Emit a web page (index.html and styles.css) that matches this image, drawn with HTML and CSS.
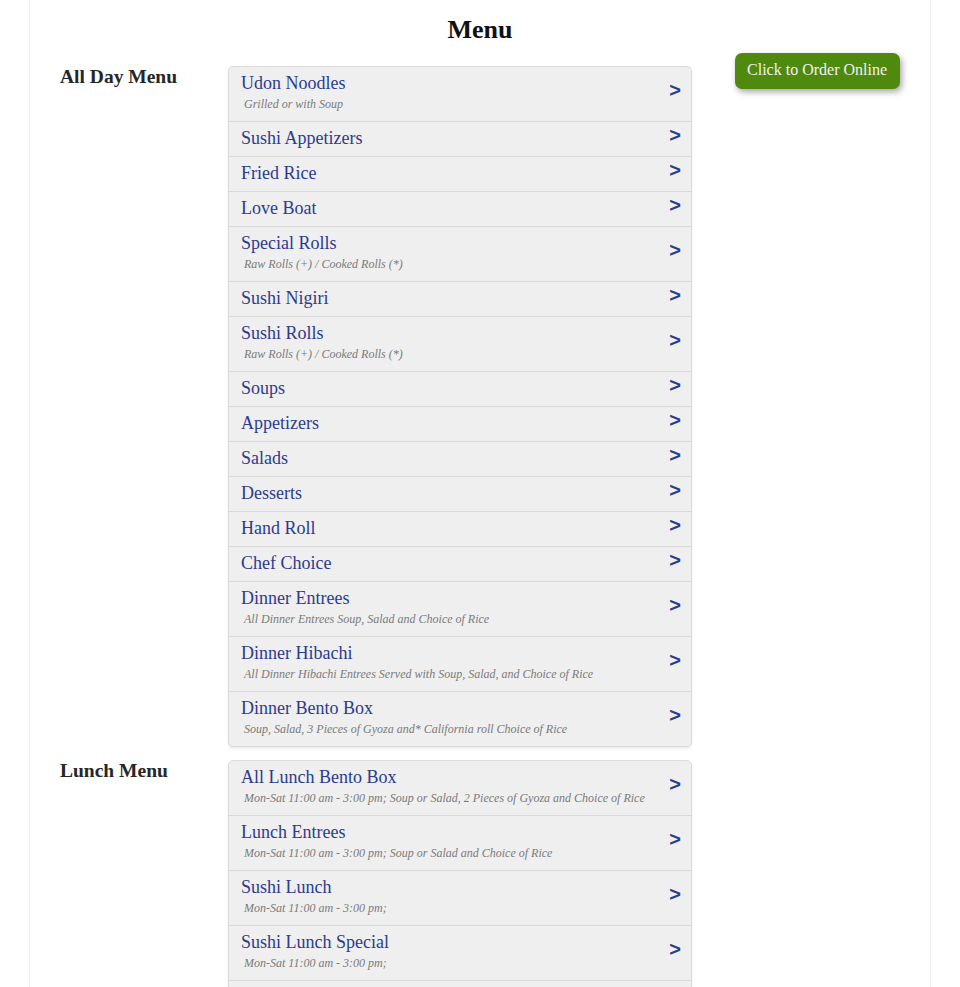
FILE: index.html
```html
<!DOCTYPE html>
<html>
<head>
<meta charset="utf-8">
<title>Menu</title>
<link rel="stylesheet" href="styles.css">
</head>
<body>
<div class="page">
  <h1 class="page-title">Menu</h1>

  <div class="section">
    <h2 class="section-label">All Day Menu</h2>
    <div class="menu-list">
      <a class="row"><div class="row-text"><div class="row-title">Udon Noodles</div><div class="row-sub">Grilled or with Soup</div></div><span class="arrow">&gt;</span></a>
      <a class="row"><div class="row-text"><div class="row-title">Sushi Appetizers</div></div><span class="arrow">&gt;</span></a>
      <a class="row"><div class="row-text"><div class="row-title">Fried Rice</div></div><span class="arrow">&gt;</span></a>
      <a class="row"><div class="row-text"><div class="row-title">Love Boat</div></div><span class="arrow">&gt;</span></a>
      <a class="row"><div class="row-text"><div class="row-title">Special Rolls</div><div class="row-sub">Raw Rolls (+) / Cooked Rolls (*)</div></div><span class="arrow">&gt;</span></a>
      <a class="row"><div class="row-text"><div class="row-title">Sushi Nigiri</div></div><span class="arrow">&gt;</span></a>
      <a class="row"><div class="row-text"><div class="row-title">Sushi Rolls</div><div class="row-sub">Raw Rolls (+) / Cooked Rolls (*)</div></div><span class="arrow">&gt;</span></a>
      <a class="row"><div class="row-text"><div class="row-title">Soups</div></div><span class="arrow">&gt;</span></a>
      <a class="row"><div class="row-text"><div class="row-title">Appetizers</div></div><span class="arrow">&gt;</span></a>
      <a class="row"><div class="row-text"><div class="row-title">Salads</div></div><span class="arrow">&gt;</span></a>
      <a class="row"><div class="row-text"><div class="row-title">Desserts</div></div><span class="arrow">&gt;</span></a>
      <a class="row"><div class="row-text"><div class="row-title">Hand Roll</div></div><span class="arrow">&gt;</span></a>
      <a class="row"><div class="row-text"><div class="row-title">Chef Choice</div></div><span class="arrow">&gt;</span></a>
      <a class="row"><div class="row-text"><div class="row-title">Dinner Entrees</div><div class="row-sub">All Dinner Entrees Soup, Salad and Choice of Rice</div></div><span class="arrow">&gt;</span></a>
      <a class="row"><div class="row-text"><div class="row-title">Dinner Hibachi</div><div class="row-sub">All Dinner Hibachi Entrees Served with Soup, Salad, and Choice of Rice</div></div><span class="arrow">&gt;</span></a>
      <a class="row"><div class="row-text"><div class="row-title">Dinner Bento Box</div><div class="row-sub">Soup, Salad, 3 Pieces of Gyoza and* California roll Choice of Rice</div></div><span class="arrow">&gt;</span></a>
    </div>
    <div class="side">
      <a class="order-btn">Click to Order Online</a>
    </div>
  </div>

  <div class="section">
    <h2 class="section-label">Lunch Menu</h2>
    <div class="menu-list">
      <a class="row"><div class="row-text"><div class="row-title">All Lunch Bento Box</div><div class="row-sub">Mon-Sat 11:00 am - 3:00 pm; Soup or Salad, 2 Pieces of Gyoza and Choice of Rice</div></div><span class="arrow">&gt;</span></a>
      <a class="row"><div class="row-text"><div class="row-title">Lunch Entrees</div><div class="row-sub">Mon-Sat 11:00 am - 3:00 pm; Soup or Salad and Choice of Rice</div></div><span class="arrow">&gt;</span></a>
      <a class="row"><div class="row-text"><div class="row-title">Sushi Lunch</div><div class="row-sub">Mon-Sat 11:00 am - 3:00 pm;</div></div><span class="arrow">&gt;</span></a>
      <a class="row"><div class="row-text"><div class="row-title">Sushi Lunch Special</div><div class="row-sub">Mon-Sat 11:00 am - 3:00 pm;</div></div><span class="arrow">&gt;</span></a>
      <a class="row"><div class="row-text"><div class="row-title">Lunch Special Rolls</div><div class="row-sub">Mon-Sat 11:00 am - 3:00 pm;</div></div><span class="arrow">&gt;</span></a>
    </div>
    <div class="side"></div>
  </div>
</div>
</body>
</html>
```

FILE: styles.css
```css
html, body {
  margin: 0;
  padding: 0;
  background: #ffffff;
}

body {
  font-family: "Liberation Serif", "Times New Roman", serif;
  color: #222222;
}

.page {
  width: 900px;
  margin: 0 auto;
  padding: 15px 0 40px;
  border-left: 1px solid #efefef;
  border-right: 1px solid #efefef;
  min-height: 1200px;
}

.page-title {
  margin: 0 0 21px;
  font-size: 26px;
  line-height: 30px;
  font-weight: bold;
  text-align: center;
  color: #111111;
}

.section {
  display: flex;
  align-items: flex-start;
  padding: 0 30px;
  margin-bottom: 13px;
}

.section-label {
  width: 168px;
  flex: none;
  margin: 0;
  font-size: 19.5px;
  line-height: 22px;
  font-weight: bold;
  color: #262626;
}

.menu-list {
  width: 462px;
  flex: none;
  background: #efefef;
  border: 1px solid #dcdcdc;
  border-radius: 5px;
  box-shadow: 0 2px 3px rgba(0, 0, 0, 0.08);
}

.row {
  display: flex;
  align-items: center;
  padding: 5px 10px 7px 12px;
  border-top: 1px solid #d9d9d9;
  cursor: pointer;
}

.row:first-child {
  border-top: none;
}

.row-text {
  flex: 1;
}

.row-title {
  font-size: 18px;
  line-height: 22px;
  color: #2b3b8e;
}

.row-sub {
  padding-left: 3px;
  font-size: 12px;
  line-height: 20px;
  font-style: italic;
  color: #7a7a7a;
}

.arrow {
  flex: none;
  margin-top: -7px;
  font-family: "Liberation Sans", Arial, sans-serif;
  font-weight: bold;
  font-size: 20px;
  line-height: 22px;
  color: #2b3b8e;
}

.side {
  flex: 1;
  display: flex;
  justify-content: flex-end;
  margin-top: -13px;
}

.order-btn {
  display: inline-block;
  padding: 0 13px 0 12px;
  height: 36px;
  line-height: 34px;
  font-size: 16px;
  color: #f2f2f2;
  background: #4f890d;
  border-radius: 7px;
  box-shadow: 2px 3px 6px rgba(0, 0, 0, 0.35);
  cursor: pointer;
}
```
